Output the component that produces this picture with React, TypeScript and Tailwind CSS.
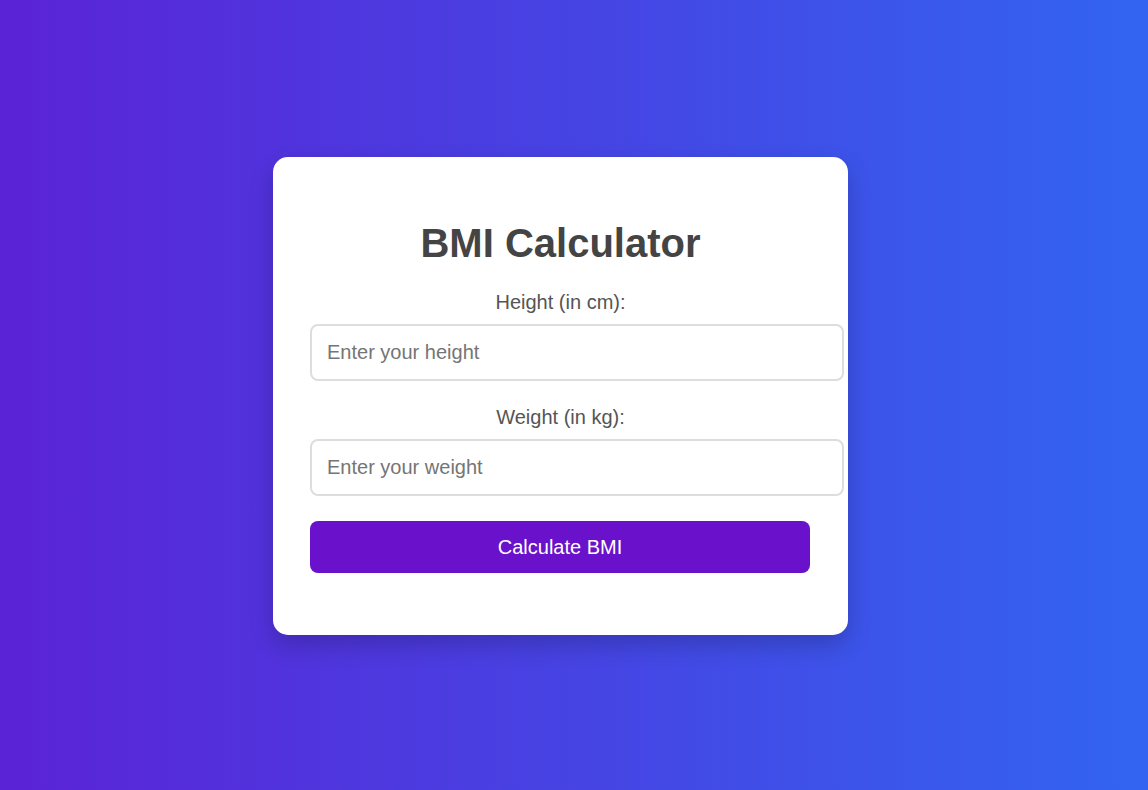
export default function App() {
  return (
    <div
      className="flex h-[790px] w-full items-center justify-center bg-[linear-gradient(to_right,#5b23d6,#3264f1)]"
      style={{ fontFamily: '"Liberation Sans", Arial, sans-serif' }}
    >
      <div className="mr-[27px] mt-[2px] flex h-[478px] w-[575px] flex-col rounded-[15px] bg-white px-[37px] pt-[63px] shadow-[0_10px_25px_rgba(0,0,0,0.2)]">
        <h1 className="mb-[25px] h-[46px] text-center text-[40px] font-bold leading-[46px] text-[#444]">
          BMI Calculator
        </h1>
        <label className="mb-[10px] block h-[23px] text-center text-[20px] leading-[23px] text-[#555]">
          Height (in cm):
        </label>
        <input
          type="number"
          placeholder="Enter your height"
          className="mb-[25px] box-border h-[57px] w-[534px] shrink-0 rounded-[8px] border-2 border-[#ddd] bg-white px-[15px] text-[20px] text-[#333] outline-none placeholder:text-[#757575]"
        />
        <label className="mb-[10px] block h-[23px] text-center text-[20px] leading-[23px] text-[#555]">
          Weight (in kg):
        </label>
        <input
          type="number"
          placeholder="Enter your weight"
          className="mb-[25px] box-border h-[57px] w-[534px] shrink-0 rounded-[8px] border-2 border-[#ddd] bg-white px-[15px] text-[20px] text-[#333] outline-none placeholder:text-[#757575]"
        />
        <button className="h-[52px] w-[500px] shrink-0 rounded-[8px] bg-[#6a11cb] text-[20px] text-white">
          Calculate BMI
        </button>
      </div>
    </div>
  );
}
